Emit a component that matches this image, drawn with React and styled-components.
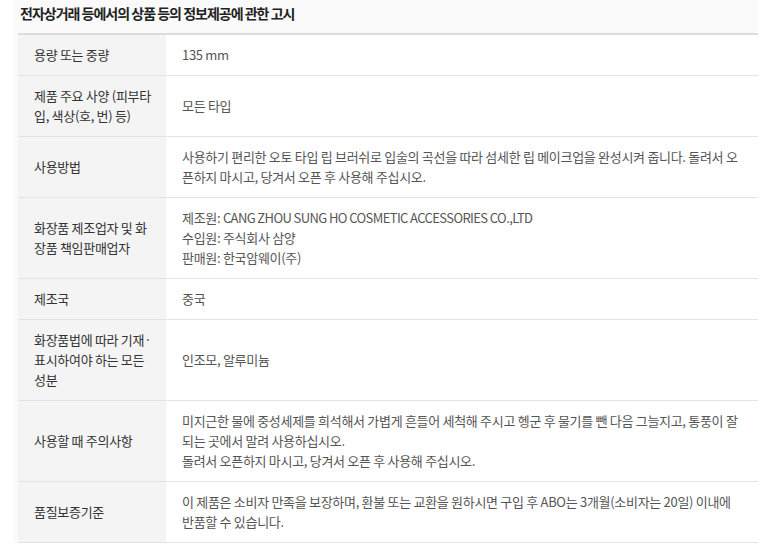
import React from 'react';
import styled, { createGlobalStyle } from 'styled-components';

const GlobalStyle = createGlobalStyle`
  body {
    margin: 0;
    background: #fff;
    font-family: "Noto Sans CJK KR", "Noto Sans", sans-serif;
  }
`;

const Wrapper = styled.div`
  width: 744px;
  margin-left: 14px;
  background: #fafafa;
  padding-left: 4px;
  box-sizing: border-box;
`;

const Title = styled.h3`
  margin: 0;
  height: 33px;
  padding-left: 2px;
  font-size: 14px;
  font-weight: 700;
  line-height: 26px;
  color: #222;
  letter-spacing: -1px;
`;

const Table = styled.div`
  border-top: 2px solid #dcdcdc;
  font-size: 13px;
  line-height: 20px;
  letter-spacing: -0.3px;
`;

const Row = styled.div`
  display: grid;
  grid-template-columns: 148px 1fr;
  border-bottom: 1px solid #e3e3e3;
`;

const Label = styled.div`
  display: flex;
  align-items: center;
  padding: 10px 12px 10px 16px;
  background: #f4f4f4;
  color: #333;
`;

const Value = styled.div`
  display: flex;
  flex-direction: column;
  justify-content: center;
  padding: 10px 14px 10px 16px;
  background: #fff;
  color: #555;
`;

const Latin = styled.span`
  letter-spacing: -0.6px;
`;

const rows = [
  ['용량 또는 중량', ['135 mm']],
  ['제품 주요 사양 (피부타입, 색상(호, 번) 등)', ['모든 타입']],
  ['사용방법', ['사용하기 편리한 오토 타입 립 브러쉬로 입술의 곡선을 따라 섬세한 립 메이크업을 완성시켜 줍니다. 돌려서 오픈하지 마시고, 당겨서 오픈 후 사용해 주십시오.']],
  ['화장품 제조업자 및 화장품 책임판매업자', [<>제조원: <Latin>CANG ZHOU SUNG HO COSMETIC ACCESSORIES CO.,LTD</Latin></>, '수입원: 주식회사 삼양', '판매원: 한국암웨이(주)']],
  ['제조국', ['중국']],
  ['화장품법에 따라 기재·표시하여야 하는 모든 성분', ['인조모, 알루미늄']],
  ['사용할 때 주의사항', ['미지근한 물에 중성세제를 희석해서 가볍게 흔들어 세척해 주시고 헹군 후 물기를 뺀 다음 그늘지고, 통풍이 잘 되는 곳에서 말려 사용하십시오.', '돌려서 오픈하지 마시고, 당겨서 오픈 후 사용해 주십시오.']],
  ['품질보증기준', ['이 제품은 소비자 만족을 보장하며, 환불 또는 교환을 원하시면 구입 후 ABO는 3개월(소비자는 20일) 이내에 반품할 수 있습니다.']],
];

export default function App() {
  return (
    <>
      <GlobalStyle />
      <Wrapper>
        <Title>전자상거래 등에서의 상품 등의 정보제공에 관한 고시</Title>
        <Table>
          {rows.map(([label, lines]) => (
            <Row key={label}>
              <Label>{label}</Label>
              <Value>
                {lines.map((line, i) => (
                  <div key={i}>{line}</div>
                ))}
              </Value>
            </Row>
          ))}
        </Table>
      </Wrapper>
    </>
  );
}
